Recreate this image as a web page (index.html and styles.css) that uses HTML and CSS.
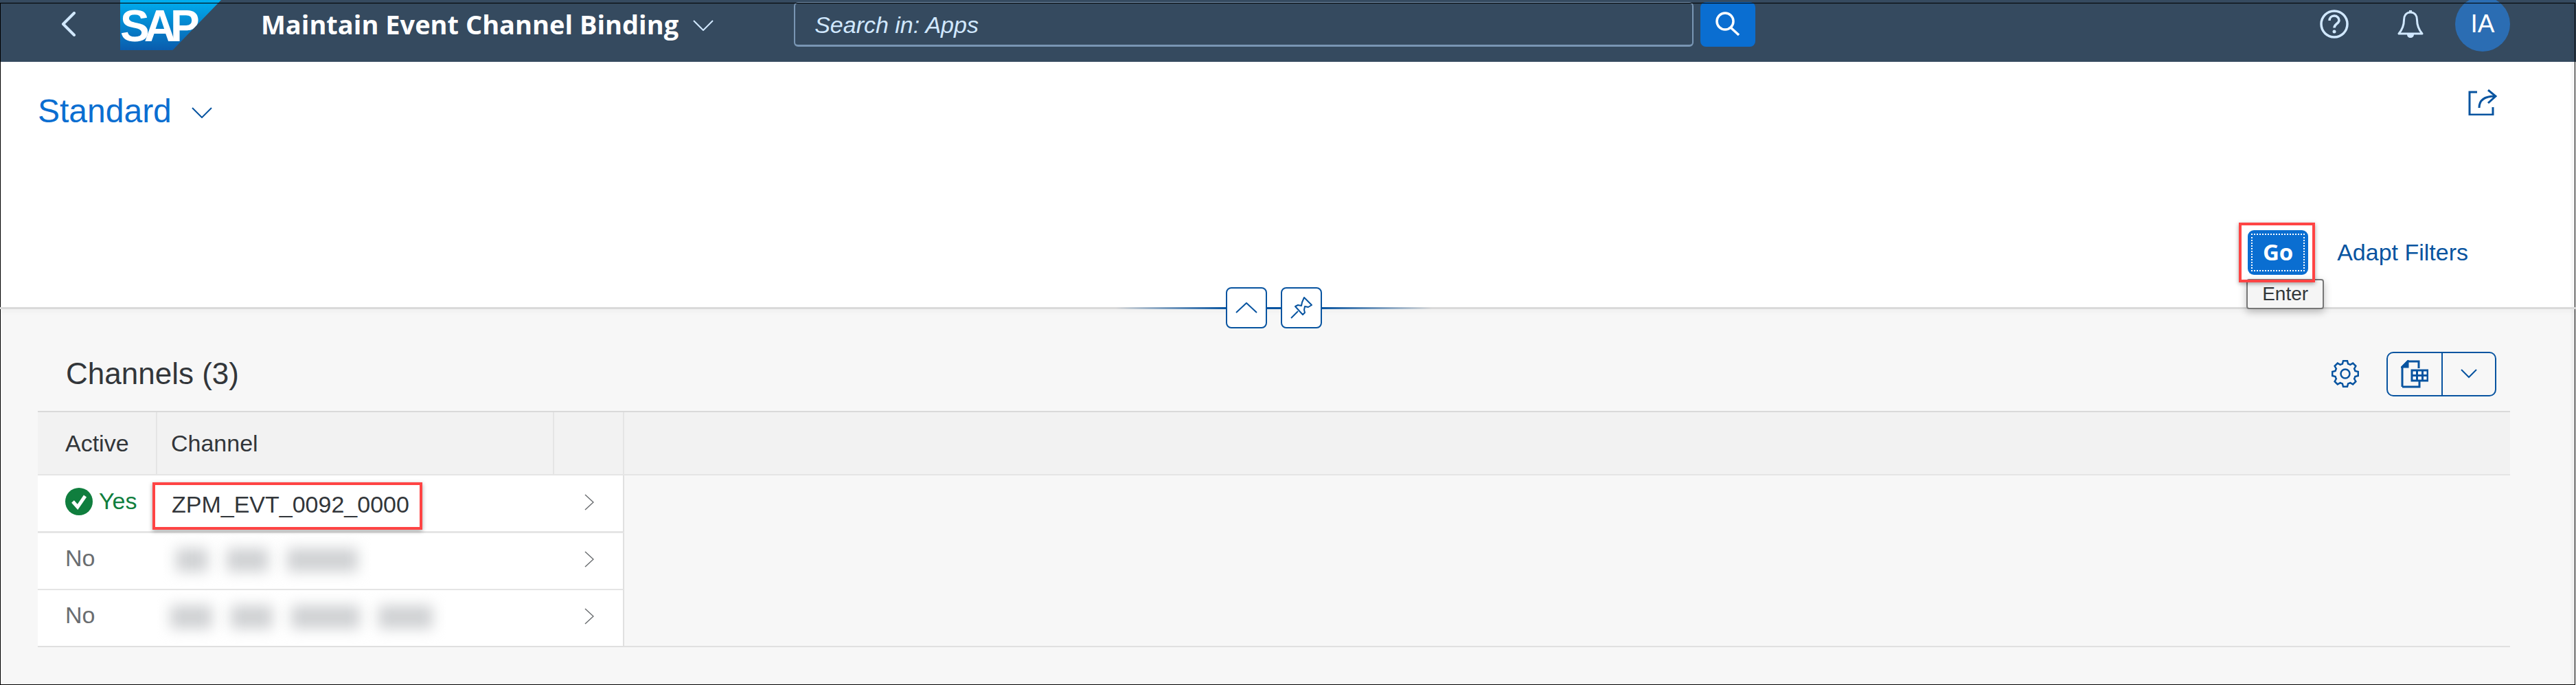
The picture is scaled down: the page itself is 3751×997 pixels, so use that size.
FILE: index.html
```html
<!DOCTYPE html>
<html lang="en">
<head>
<meta charset="UTF-8">
<meta name="viewport" content="width=device-width, initial-scale=1.0">
<title>Maintain Event Channel Binding</title>
<link rel="stylesheet" href="styles.css">
</head>
<body>

<div class="page">
  <header class="shell">
    <svg class="back-icon" width="24" height="36" viewBox="0 0 24 36"><polyline points="20,2 4,18 20,34"/></svg>
    <div class="sap-logo"><span>SAP</span></div>
    <div class="app-title">Maintain Event Channel Binding</div>
    <svg class="title-chevron" width="30" height="16" viewBox="0 0 30 16"><polyline points="1,1 15,15 29,1"/></svg>
    <div class="search-field">Search in: Apps</div>
    <button class="search-btn">
      <svg width="38" height="36" viewBox="0 0 38 36"><circle cx="15" cy="14" r="12"/><line x1="23" y1="23" x2="35" y2="34"/></svg>
    </button>
    <div class="shell-right">
      <svg class="help-icon" width="42" height="42" viewBox="0 0 42 42">
        <circle cx="21" cy="21" r="19"/>
        <path d="M14 16c0-4 3-7 7-7s7 3 7 6.500c0 5-7 5.500-7 11"/>
        <circle class="dot" cx="21" cy="32" r="2.500"/>
      </svg>
      <svg class="bell-icon" width="38" height="42" viewBox="0 0 38 42">
        <path d="M19 4c-6.500 0-9.500 5-9.500 11 0 8-2.500 14-7.500 20h34c-5-6-7.500-12-7.500-20 0-6-3-11-9.500-11z"/>
        <path class="solid" d="M14 36h10c0 3-2 5-5 5s-5-2-5-5zM17 1h4v4h-4z"/>
      </svg>
      <div class="avatar">IA</div>
    </div>
  </header>

  <section class="filter-bar">
    <div class="variant-row">
      <div class="variant-name">Standard</div>
      <svg class="variant-chevron" width="30" height="16" viewBox="0 0 30 16"><polyline points="1,1 15,15 29,1"/></svg>
      <svg class="share-icon" width="42" height="38" viewBox="0 0 42 38">
        <path d="M13 4H2v33h34V26"/>
        <path d="M16 27c0-11 7-17 23-17M29 1l11 9-11 10"/>
      </svg>
    </div>
    <div class="go-row">
      <div class="go-wrap">
        <div class="tooltip">Enter</div>
        <button class="go-btn"><span>Go</span></button>
        <div class="red-box"></div>
      </div>
      <a class="adapt-link">Adapt Filters</a>
    </div>
  </section>

  <div class="collapse-line">
    <div class="collapse-tools">
      <button class="tool-btn">
        <svg width="32" height="18" viewBox="0 0 32 18"><polyline points="1,16 16,2 31,16"/></svg>
      </button>
      <button class="tool-btn">
        <svg width="34" height="34" viewBox="0 0 34 34">
          <path d="M21 2l11 11-5 3-5-1-1 5 1 4-3 3-11-12 4-2 5 1 1-5z"/>
          <line x1="12" y1="22" x2="2" y2="32"/>
        </svg>
      </button>
    </div>
  </div>

  <main class="content">
    <div class="toolbar">
      <h2 class="table-title">Channels (3)</h2>
      <svg class="gear-icon" width="40" height="40" viewBox="0 0 40 40">
        <path d="M15.870 5.580L17.030 1.230H22.970L24.130 5.580A15 15 0 0 1 27.280 6.880L31.170 4.630L35.370 8.830L33.120 12.720A15 15 0 0 1 34.420 15.870L38.770 17.030V22.970L34.420 24.130A15 15 0 0 1 33.120 27.280L35.370 31.170L31.170 35.370L27.280 33.120A15 15 0 0 1 24.130 34.420L22.970 38.770H17.030L15.870 34.420A15 15 0 0 1 12.720 33.120L8.830 35.370L4.630 31.170L6.880 27.280A15 15 0 0 1 5.580 24.130L1.230 22.970V17.030L5.580 15.870A15 15 0 0 1 6.880 12.720L4.630 8.830L8.830 4.630L12.720 6.880A15 15 0 0 1 15.870 5.580Z"/>
        <circle cx="20" cy="20" r="6.500"/>
      </svg>
      <div class="export-group">
        <div class="export-main">
          <svg width="40" height="41" viewBox="0 0 40 41">
            <path d="M2 39V10L10 2H26V12"/>
            <path class="solid" d="M2 10L10 2V10Z"/>
            <path d="M2 39H27V30"/>
            <path class="grid" d="M16 15H39V30H16ZM16 22.500H39M23.500 15V30M31.500 15V30"/>
          </svg>
        </div>
        <div class="export-more">
          <svg width="24" height="14" viewBox="0 0 24 14"><polyline points="1,1 12,12 23,1"/></svg>
        </div>
      </div>
    </div>

    <div class="table">
      <div class="row head-row">
        <div class="cell">Active</div>
        <div class="cell">Channel</div>
        <div class="cell"></div>
        <div class="cell"></div>
      </div>
      <div class="row first-row">
        <div class="cell status-yes">
          <svg width="40" height="40" viewBox="0 0 40 40"><circle cx="20" cy="20" r="20"/><polyline points="11,20 18,28 29,12"/></svg>
          Yes
        </div>
        <div class="cell channel">ZPM_EVT_0092_0000<div class="red-box channel-box"></div></div>
        <div class="cell nav-cell"><svg width="14" height="24" viewBox="0 0 14 24"><polyline points="1,1 13,12 1,23"/></svg></div>
      </div>
      <div class="row">
        <div class="cell status-no">No</div>
        <div class="cell blur-cell short-blur">
          <span class="blur" style="width:47px"></span><span class="blur" style="width:61px"></span><span class="blur" style="width:103px"></span>
        </div>
        <div class="cell nav-cell"><svg width="14" height="24" viewBox="0 0 14 24"><polyline points="1,1 13,12 1,23"/></svg></div>
      </div>
      <div class="row last-row">
        <div class="cell status-no">No</div>
        <div class="cell blur-cell">
          <span class="blur" style="width:61px"></span><span class="blur" style="width:61px"></span><span class="blur" style="width:100px"></span><span class="blur" style="width:79px"></span>
        </div>
        <div class="cell nav-cell"><svg width="14" height="24" viewBox="0 0 14 24"><polyline points="1,1 13,12 1,23"/></svg></div>
      </div>
    </div>
  </main>

  <div class="frame"></div>
</div>

</body>
</html>
```

FILE: styles.css
```css
* {
  box-sizing: border-box;
}

body {
  margin: 0;
  font-family: "Liberation Sans", Arial, sans-serif;
  background-color: #f7f7f7;
  color: #32363a;
}

svg {
  display: block;
  fill: none;
}

button {
  padding: 0;
  font-family: inherit;
}

.page {
  position: relative;
  width: 3751px;
  height: 997px;
  overflow: hidden;
}

.frame {
  position: absolute;
  top: 4px;
  left: 0;
  right: 1px;
  bottom: 0;
  border: 1px solid #000;
  box-shadow: inset -4px 0 4px rgba(0, 0, 0, 0.06);
  pointer-events: none;
}

/* shell bar */
.shell {
  display: flex;
  align-items: center;
  height: 90px;
  padding: 0 96px 20px 88px;
  background-color: #354a5f;
  overflow: hidden;
}

.back-icon polyline {
  stroke: #d1e8ff;
  stroke-width: 4;
  stroke-linecap: round;
  stroke-linejoin: round;
}

.sap-logo {
  width: 147px;
  height: 73px;
  margin: 3px 0 0 63px;
  background: linear-gradient(#00aeef, #0a5cad);
  clip-path: polygon(0 0, 100% 0, 52% 100%, 0 100%);
  color: #fff;
  font-size: 64px;
  font-weight: bold;
  letter-spacing: -8px;
  line-height: 76px;
}

.app-title {
  margin-left: 58px;
  color: #fff;
  font-family: "Open Sans", sans-serif;
  font-size: 38px;
  font-weight: 700;
  white-space: nowrap;
}

.title-chevron {
  margin: 4px 0 0 21px;
}

.title-chevron polyline,
.variant-chevron polyline {
  stroke-width: 2;
}

.title-chevron polyline {
  stroke: #d1e8ff;
}

.search-field {
  width: 1310px;
  height: 65px;
  margin-left: 117px;
  padding: 9px 28px 0;
  border: 2px solid #7996b4;
  border-bottom-width: 3px;
  border-radius: 6px;
  color: #d1e8ff;
  font-size: 34px;
  font-style: italic;
  line-height: 44px;
}

.search-btn {
  display: flex;
  align-items: center;
  justify-content: center;
  width: 80px;
  height: 65px;
  margin-left: 10px;
  border: none;
  border-radius: 8px;
  background-color: #0a6ed1;
}

.search-btn svg {
  stroke: #fff;
  stroke-width: 3.500;
}

.shell-right {
  display: flex;
  align-items: center;
  margin-left: auto;
}

.help-icon circle,
.help-icon path {
  stroke: #d1e8ff;
  stroke-width: 3.500;
}

.help-icon .dot {
  fill: #d1e8ff;
  stroke: none;
}

.bell-icon {
  margin-left: 71px;
}

.bell-icon path {
  stroke: #d1e8ff;
  stroke-width: 3;
  stroke-linejoin: round;
}

.bell-icon .solid {
  fill: #d1e8ff;
  stroke: none;
}

.avatar {
  flex: none;
  width: 80px;
  height: 80px;
  margin-left: 46px;
  border-radius: 50%;
  background-color: #2b6db3;
  color: #fff;
  font-size: 37px;
  line-height: 80px;
  text-align: center;
}

/* filter bar */
.filter-bar {
  display: flex;
  flex-direction: column;
  justify-content: space-between;
  height: 357px;
  padding: 39px 115px 47px 55px;
  background-color: #fff;
}

.variant-row {
  display: flex;
  align-items: center;
}

.variant-name {
  color: #0a6ed1;
  font-size: 48px;
  line-height: 66px;
}

.variant-chevron {
  margin: 4px 0 0 29px;
}

.variant-chevron polyline {
  stroke: #0854a0;
}

.share-icon {
  margin: -27px 0 0 auto;
  stroke: #0854a0;
  stroke-width: 3;
}

.go-row {
  display: flex;
  align-items: center;
  justify-content: flex-end;
  padding-right: 42px;
}

.go-wrap {
  position: relative;
  left: -1px;
  width: 88px;
  height: 65px;
}

.go-btn {
  position: relative;
  display: block;
  width: 88px;
  height: 65px;
  padding: 5px;
  border: none;
  border-radius: 9px;
  background-color: #0a6ed1;
  color: #fff;
  font-family: "Open Sans", sans-serif;
  font-size: 33px;
  font-weight: 700;
}

.go-btn span {
  display: block;
  height: 100%;
  border: 2px dotted #fff;
  line-height: 50px;
}

.red-box {
  position: absolute;
  top: -11px;
  left: -13px;
  right: -10px;
  bottom: -11px;
  border: 4px solid #ff4444;
  box-shadow: 0 2px 6px rgba(0, 0, 0, 0.35);
  z-index: 3;
}

.tooltip {
  position: absolute;
  top: 71px;
  left: -2px;
  width: 113px;
  height: 44px;
  padding-top: 2px;
  border: 2px solid #777;
  border-radius: 4px;
  background-color: #f5f5f5;
  box-shadow: 0 4px 12px rgba(0, 0, 0, 0.25);
  font-size: 28px;
  line-height: 36px;
  text-align: center;
  z-index: 2;
}

.adapt-link {
  margin-left: 41px;
  color: #0854a0;
  font-size: 34px;
}

/* collapse line */
.collapse-line {
  position: relative;
  height: 3px;
  background-color: #d9d9d9;
  box-shadow: 0 3px 6px rgba(0, 0, 0, 0.06);
  z-index: 1;
}

.collapse-tools {
  position: absolute;
  top: -29px;
  left: 1625px;
  display: flex;
  align-items: center;
  justify-content: center;
  gap: 20px;
  width: 460px;
  height: 60px;
  background: linear-gradient(90deg, transparent, #0854a0 35%, #0854a0 65%, transparent) center / 100% 3px no-repeat;
}

.tool-btn {
  display: flex;
  align-items: center;
  justify-content: center;
  width: 60px;
  height: 60px;
  border: 2px solid #0854a0;
  border-radius: 8px;
  background-color: #fff;
}

.tool-btn svg {
  stroke: #0854a0;
  stroke-width: 2;
  stroke-linejoin: round;
}

/* table section */
.content {
  padding: 0 96px 0 55px;
}

.toolbar {
  display: flex;
  align-items: center;
  height: 148px;
  padding: 40px 20px 0 41px;
}

.table-title {
  margin: 0;
  font-size: 44px;
  font-weight: 400;
}

.gear-icon {
  margin-left: auto;
  stroke: #0854a0;
  stroke-width: 2.500;
}

.export-group {
  display: flex;
  width: 160px;
  height: 65px;
  margin-left: 40px;
  border: 2px solid #0854a0;
  border-radius: 10px;
}

.export-main,
.export-more {
  display: flex;
  align-items: center;
  justify-content: center;
}

.export-main {
  width: 80px;
  border-right: 2px solid #0854a0;
}

.export-main svg {
  stroke: #0854a0;
  stroke-width: 3;
}

.export-main .solid {
  fill: #0854a0;
}

.export-main .grid {
  fill: #fff;
}

.export-more {
  flex: 1;
}

.export-more svg {
  stroke: #0854a0;
  stroke-width: 2;
}

.table {
  border-top: 2px solid #d9d9d9;
}

.row {
  display: grid;
  grid-template-columns: 174px 578px 102px;
  height: 83px;
}

.head-row {
  grid-template-columns: 174px 578px 102px 1fr;
  height: 92px;
  background-color: #f2f2f2;
  border-bottom: 2px solid #e5e5e5;
}

.first-row {
  height: 84px;
}

.first-row .cell {
  border-bottom-width: 3px;
}

.last-row {
  border-bottom: 2px solid #e0e0e0;
}

.cell {
  position: relative;
  display: flex;
  align-items: center;
  padding-left: 40px;
  border-bottom: 2px solid #e5e5e5;
  background-color: #fff;
  font-size: 34px;
  white-space: nowrap;
}

.last-row .cell {
  height: 81px;
  border-bottom: none;
}

.head-row .cell {
  background-color: transparent;
  border-bottom: none;
  border-right: 2px solid #e5e5e5;
}

.head-row .cell:nth-child(4) {
  border-right: none;
}

.head-row .cell:nth-child(2) {
  padding-left: 20px;
}

.status-yes {
  gap: 9px;
  padding-bottom: 6px;
  color: #107e3e;
}

.status-yes circle {
  fill: #107e3e;
}

.status-yes polyline {
  stroke: #fff;
  stroke-width: 5;
}

.status-no {
  padding-bottom: 8px;
  color: #6a6d70;
}

.channel {
  padding: 4px 0 0 21px;
}

.channel-box {
  top: 10px;
  left: -7px;
  right: auto;
  bottom: auto;
  width: 393px;
  height: 69px;
}

.blur-cell {
  gap: 27px;
  padding: 0 0 3px 19px;
}

.short-blur {
  padding-left: 27px;
}

.blur {
  flex: none;
  height: 34px;
  background-color: #cfd1d3;
  filter: blur(10px);
}

.nav-cell {
  padding: 0 0 6px 44px;
  border-right: 2px solid #e0e0e0;
}

.first-row .nav-cell {
  padding-bottom: 4px;
}

.nav-cell polyline {
  stroke: #6a6d70;
  stroke-width: 1.500;
}
```
